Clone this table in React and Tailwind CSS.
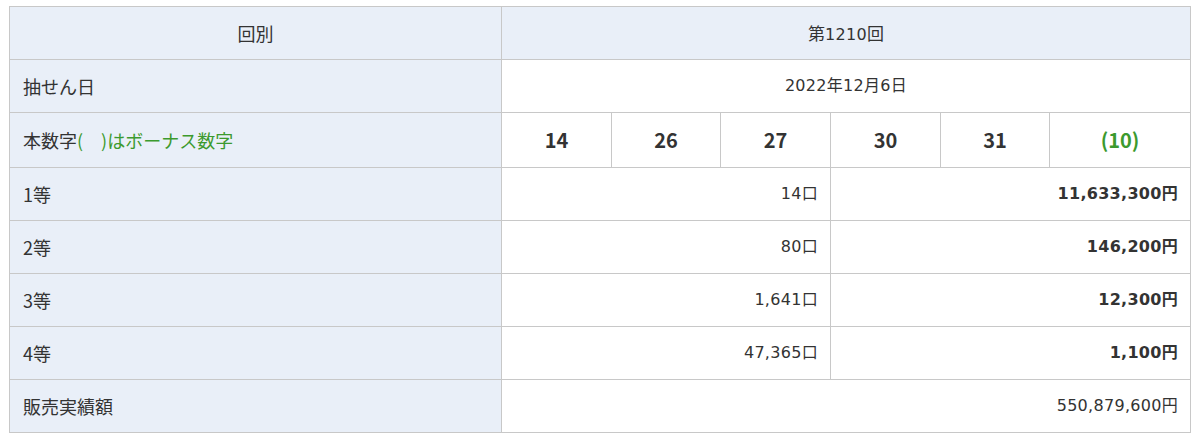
import React from 'react';

const nums = ['14', '26', '27', '30', '31'];

const prizes = [
  { label: '1等', count: '14口', amount: '11,633,300円' },
  { label: '2等', count: '80口', amount: '146,200円' },
  { label: '3等', count: '1,641口', amount: '12,300円' },
  { label: '4等', count: '47,365口', amount: '1,100円' },
];

const cell = 'border border-[#c8c8c8]';
const head = `${cell} bg-[#e9eff8] text-left pl-[13px] font-normal text-[18px]`;
// wider latin digits for the value cells
const val = 'font-["DejaVu_Sans","Noto_Sans_CJK_JP",sans-serif] text-[16px] tracking-[0.3px]';

const App = () => {
  return (
    <div
      className="bg-white w-[1200px] h-[442px] pt-[6px] pl-[9px] text-[#333] text-[16px]"
      style={{ fontFamily: '"Noto Sans CJK JP", "Noto Sans", sans-serif' }}
    >
      <table className="table-fixed border-collapse w-[1181px]">
        <colgroup>
          <col className="w-[492px]" />
          <col className="w-[110px]" />
          <col className="w-[109px]" />
          <col className="w-[110px]" />
          <col className="w-[110px]" />
          <col className="w-[109px]" />
          <col className="w-[141px]" />
        </colgroup>
        <tbody>
          <tr className="h-[53px]">
            <th className={`${cell} bg-[#e9eff8] font-normal text-center text-[18px]`}>回別</th>
            <th colSpan={6} className={`${cell} bg-[#e9eff8] font-normal text-center text-[17px]`}>
              第<span className={val}>1210</span>回
            </th>
          </tr>
          <tr className="h-[53px]">
            <th className={head}>抽せん日</th>
            <td colSpan={6} className={`${cell} text-center ${val}`}>2022年12月6日</td>
          </tr>
          <tr className="h-[55px]">
            <th className={head}>
              本数字
              <span className="text-[#3c9a2e]">
                (<span className="inline-block w-[18px]" />)はボーナス数字
              </span>
            </th>
            {nums.map((n) => (
              <td key={n} className={`${cell} text-center font-bold text-[20px]`}>{n}</td>
            ))}
            <td className={`${cell} text-center font-bold text-[20px] text-[#3c9a2e]`}>(10)</td>
          </tr>
          {prizes.map((p) => (
            <tr key={p.label} className="h-[53px]">
              <th className={head}>{p.label}</th>
              <td colSpan={3} className={`${cell} text-right pr-[12px] ${val}`}>{p.count}</td>
              <td colSpan={3} className={`${cell} text-right pr-[12px] font-bold ${val}`}>{p.amount}</td>
            </tr>
          ))}
          <tr className="h-[53px]">
            <th className={head}>販売実績額</th>
            <td colSpan={6} className={`${cell} text-right pr-[12px] ${val}`}>550,879,600円</td>
          </tr>
        </tbody>
      </table>
    </div>
  );
};

export default App;
